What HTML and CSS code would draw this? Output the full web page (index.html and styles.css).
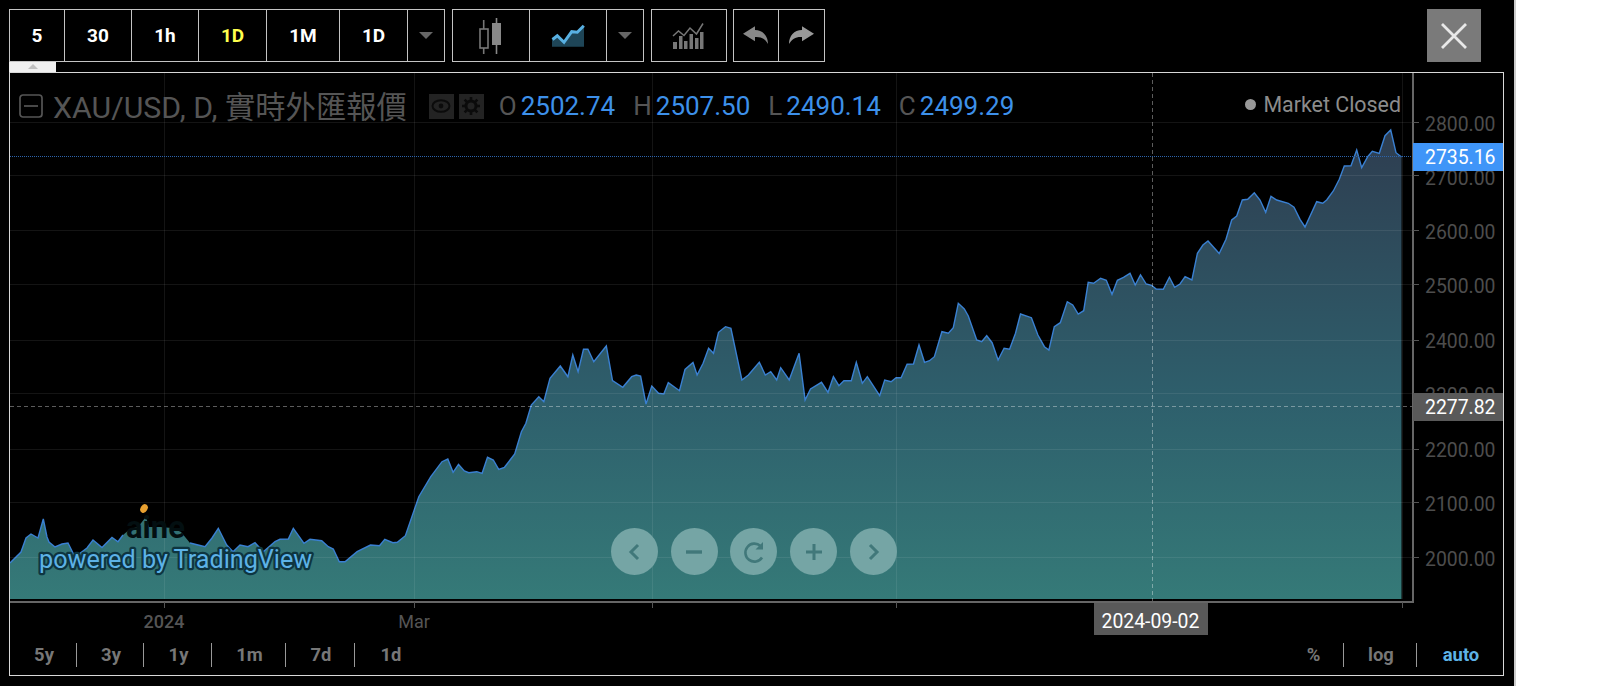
FILE: index.html
```html
<!DOCTYPE html>
<html lang="zh-Hant">
<head>
  <meta charset="UTF-8">
  <meta name="viewport" content="width=device-width, initial-scale=1.0">
  <title>XAU/USD</title>
  <link rel="stylesheet" href="styles.css">
</head>
<body>
  <div class="app">
    <div class="toolbar">
      <div class="group group-time">
        <div class="cell">5</div>
        <div class="cell">30</div>
        <div class="cell">1h</div>
        <div class="cell active">1D</div>
        <div class="cell">1M</div>
        <div class="cell">1D</div>
        <div class="cell"><span class="caret"></span></div>
      </div>
      <div class="group group-type">
        <div class="cell">
          <svg width="28" height="40" viewBox="478 16 28 40">
            <path d="M484.7 20V54" stroke="#777" stroke-width="1.6"/>
            <rect x="481" y="29" width="8" height="19" fill="#000" stroke="#777" stroke-width="1.6"/>
            <path d="M497.5 18V54" stroke="#888" stroke-width="1.6"/>
            <rect x="493" y="23" width="9" height="22" fill="#888"/>
          </svg>
        </div>
        <div class="cell">
          <svg width="36" height="26" viewBox="550 24 36 26">
            <path d="M552 40L557.3 36.7 564 43.3 571.7 32.7 577.3 33.3 584 26.7V47.7H552Z" fill="#1e4557"/>
            <path d="M552.5 40.5L557.3 36.7 564 43.3 571.7 32.7 577.3 33.3 583.8 26.7" fill="none" stroke="#58b0e2" stroke-width="3"/>
          </svg>
        </div>
        <div class="cell"><span class="caret"></span></div>
      </div>
      <div class="group group-study">
        <div class="cell">
          <svg width="34" height="30" viewBox="672 22 34 30">
            <path d="M673 37L678.5 32 684 36.5 690 29 696.5 35 703 24.5" fill="none" stroke="#777" stroke-width="1.5"/>
            <path d="M673 43h4v7h-4zM679 37h3.5v13H679zM684 42h3.5v8H684zM689.5 35h3.5v15h-3.5zM695 39h3.5v11H695zM700 33h3.5v17H700z" fill="#777"/>
          </svg>
        </div>
      </div>
      <div class="group group-undo">
        <div class="cell">
          <svg width="26" height="20" viewBox="744 28 26 20">
            <path d="M744 35.7L756 28.3V32C764 32 769 38 769 46 766 41 762 38.5 756 39V43.3Z" fill="#888"/>
          </svg>
        </div>
        <div class="cell">
          <svg width="26" height="20" viewBox="744 28 26 20">
            <path d="M769 35.7L757 28.3V32C749 32 744 38 744 46 747 41 751 38.5 757 39V43.3Z" fill="#999"/>
          </svg>
        </div>
      </div>
      <div class="close">
        <svg width="26" height="26" viewBox="0 0 26 26">
          <path d="M1 1L25 25M25 1L1 25" stroke="#e8e8e8" stroke-width="2.8"/>
        </svg>
      </div>
    </div>

    <div class="tab"><span class="tab-arrow"></span></div>

    <div class="frame">
      <svg class="chart" width="1493" height="563" viewBox="10 73 1493 563">
        <defs>
          <linearGradient id="areaFill" gradientUnits="userSpaceOnUse" x1="0" y1="130" x2="0" y2="599">
            <stop offset="0" stop-color="#2e3d50"/>
            <stop offset="0.575" stop-color="#2e5f6c"/>
            <stop offset="1" stop-color="#357a78"/>
          </linearGradient>
        </defs>

        <path class="area" d="M10 599V563L21 552 26 538 31 534 38 538 43.3 519 47 537 49 542 55 547 62 544 68 543 75 557 87 548 93 540 102 547.5 112 537.5 118 541.7 123 535 130 529 138 527 146 516.7 149 527 160 527 172 528 181 532 190 543 198 545 205 546.7 212 538 218.3 528.3 226.7 545 233 551.7 240 545 248 546.7 255 542.7 263.3 551.7 275 541.7 280 539.3 288.3 539 293.3 528.3 304 543.3 310 539.3 321.7 540.7 328.3 546.7 333.3 549 339.3 561.7 345 561.7 357.1 551.7 370.5 545 379.5 545.7 384.8 539.3 392.9 542.7 397.3 542.3 405.4 535.7 418.8 496.7 430.8 476.7 442 461.7 447.8 459 453.1 472.3 458.5 464.3 464.3 471 468.8 472.7 476.8 471.7 482.1 473.3 487.5 457.3 493.3 460 498.7 469.3 504.5 467.3 514.7 454 521.4 431.7 525.9 423.3 531.3 405 538.8 396.7 543.8 401.7 550 378.3 560.3 366 567.9 376.7 572.8 355 578.1 371.7 583.5 349.3 587.9 349.3 593.8 361.7 606.3 346 612.5 380.7 622.8 387.3 631.7 376.7 636.2 375 640.6 376 646 404 651.8 386 658.5 393.3 663.8 394 668.3 382.7 679.5 390.7 685 369.5 693 362.5 697.1 375 703.1 363.3 708.6 348.3 713.5 353.3 718.5 332.3 725.5 326.7 730.9 328.3 741.9 380 748.4 375 759.3 362.3 765.3 375 770.7 371.7 776.7 380 780.7 367.7 789.2 380 799.1 353.3 805.1 400 810.5 389 821.5 382.3 828 392.3 833.4 376.7 838.9 385.7 843.9 380.7 851.3 380.7 856.3 362.3 862.3 383.3 867.3 376.7 879.7 395.7 884.7 380 891.1 381.7 896.1 377.7 901.1 377.7 907.1 364.3 913.5 364 919 345 924.5 362.3 929.5 360.7 934.4 356.7 941.9 331.7 948.4 333.3 953.3 327.7 958.3 303.3 964.3 309 968.3 316 976.7 340 981.7 341.7 986.7 335.7 992.1 342.7 998.1 360 1004.1 348.3 1009.6 349.3 1015.5 333.3 1020.5 314 1031.4 317.7 1037.9 335 1044.4 346.7 1048.9 350 1054.3 326.7 1060.3 322.7 1067.3 301.7 1072.7 305 1078.2 314 1083.7 310.7 1088.2 282.3 1093.6 283.3 1100.6 278.3 1106.3 280.3 1112 294.3 1117.4 280.3 1123.5 277.3 1130 273.3 1135.2 285 1140.5 275 1146.2 284 1151.5 285.3 1156.2 289 1163.3 289.2 1169.4 277.3 1174.6 287.3 1180 284 1185.1 276.7 1191.9 280 1197.4 253.3 1202.9 245 1208 241 1219.2 253.5 1226 239.3 1231.7 220 1236.7 216 1242.3 200 1247.7 199.3 1254.3 192.7 1260 200 1265.7 212.3 1271 196.3 1276.7 200 1288.3 203.3 1294 207.3 1300 219.3 1305 227 1316.7 201.7 1322.7 203.3 1326.7 200 1333.3 191 1339.3 179.3 1344.3 166 1351 165.7 1356.7 150 1361.7 167.7 1367.7 156.7 1372.3 151.3 1379.3 153.3 1385 135.7 1390.7 130 1396 152.7 1401.5 157V599Z"/>
        <path class="line" d="M10 563L21 552 26 538 31 534 38 538 43.3 519 47 537 49 542 55 547 62 544 68 543 75 557 87 548 93 540 102 547.5 112 537.5 118 541.7 123 535M190 543 198 545 205 546.7 212 538 218.3 528.3 226.7 545 233 551.7 240 545 248 546.7 255 542.7 263.3 551.7 275 541.7 280 539.3 288.3 539 293.3 528.3 304 543.3 310 539.3 321.7 540.7 328.3 546.7 333.3 549 339.3 561.7 345 561.7 357.1 551.7 370.5 545 379.5 545.7 384.8 539.3 392.9 542.7 397.3 542.3 405.4 535.7 418.8 496.7 430.8 476.7 442 461.7 447.8 459 453.1 472.3 458.5 464.3 464.3 471 468.8 472.7 476.8 471.7 482.1 473.3 487.5 457.3 493.3 460 498.7 469.3 504.5 467.3 514.7 454 521.4 431.7 525.9 423.3 531.3 405 538.8 396.7 543.8 401.7 550 378.3 560.3 366 567.9 376.7 572.8 355 578.1 371.7 583.5 349.3 587.9 349.3 593.8 361.7 606.3 346 612.5 380.7 622.8 387.3 631.7 376.7 636.2 375 640.6 376 646 404 651.8 386 658.5 393.3 663.8 394 668.3 382.7 679.5 390.7 685 369.5 693 362.5 697.1 375 703.1 363.3 708.6 348.3 713.5 353.3 718.5 332.3 725.5 326.7 730.9 328.3 741.9 380 748.4 375 759.3 362.3 765.3 375 770.7 371.7 776.7 380 780.7 367.7 789.2 380 799.1 353.3 805.1 400 810.5 389 821.5 382.3 828 392.3 833.4 376.7 838.9 385.7 843.9 380.7 851.3 380.7 856.3 362.3 862.3 383.3 867.3 376.7 879.7 395.7 884.7 380 891.1 381.7 896.1 377.7 901.1 377.7 907.1 364.3 913.5 364 919 345 924.5 362.3 929.5 360.7 934.4 356.7 941.9 331.7 948.4 333.3 953.3 327.7 958.3 303.3 964.3 309 968.3 316 976.7 340 981.7 341.7 986.7 335.7 992.1 342.7 998.1 360 1004.1 348.3 1009.6 349.3 1015.5 333.3 1020.5 314 1031.4 317.7 1037.9 335 1044.4 346.7 1048.9 350 1054.3 326.7 1060.3 322.7 1067.3 301.7 1072.7 305 1078.2 314 1083.7 310.7 1088.2 282.3 1093.6 283.3 1100.6 278.3 1106.3 280.3 1112 294.3 1117.4 280.3 1123.5 277.3 1130 273.3 1135.2 285 1140.5 275 1146.2 284 1151.5 285.3 1156.2 289 1163.3 289.2 1169.4 277.3 1174.6 287.3 1180 284 1185.1 276.7 1191.9 280 1197.4 253.3 1202.9 245 1208 241 1219.2 253.5 1226 239.3 1231.7 220 1236.7 216 1242.3 200 1247.7 199.3 1254.3 192.7 1260 200 1265.7 212.3 1271 196.3 1276.7 200 1288.3 203.3 1294 207.3 1300 219.3 1305 227 1316.7 201.7 1322.7 203.3 1326.7 200 1333.3 191 1339.3 179.3 1344.3 166 1351 165.7 1356.7 150 1361.7 167.7 1367.7 156.7 1372.3 151.3 1379.3 153.3 1385 135.7 1390.7 130 1396 152.7 1401.5 157"/>

        <!-- grid -->
        <path class="grid" d="M10 122.5H1413M10 175.5H1413M10 230.5H1413M10 284.5H1413M10 340.5H1413M10 393.5H1413M10 449.5H1413M10 502.5H1413M10 557.5H1413M164.5 73V599M414.5 73V599M652.5 73V599M896.5 73V599M1402.5 73V599"/>

        <!-- logo sits under the text, only shows where it crosses the fill -->
        <text class="logo" x="126" y="538">aine</text>
        <ellipse cx="144" cy="508.5" rx="3.4" ry="4.6" transform="rotate(30 144 508.5)" fill="#e8a030"/>
        <text class="powered" x="39" y="568">powered by TradingView</text>

        <!-- crosshair and last price -->
        <path class="cross" d="M10 406.5H1420M1152.5 73V608"/>
        <path class="last" d="M10 156.5H1420"/>

        <!-- axes -->
        <path class="axis" d="M1413 73V602H10"/>
        <path class="tick" d="M1413 122.5h6M1413 175.5h6M1413 230.5h6M1413 284.5h6M1413 340.5h6M1413 393.5h6M1413 449.5h6M1413 502.5h6M1413 557.5h6M164.5 602v6M414.5 602v6M652.5 602v6M896.5 602v6M1402.5 602v6"/>

        <g class="price">
          <text x="1425" y="131">2800.00</text>
          <text x="1425" y="184.5">2700.00</text>
          <text x="1425" y="239">2600.00</text>
          <text x="1425" y="293">2500.00</text>
          <text x="1425" y="347.5">2400.00</text>
          <text x="1425" y="402">2300.00</text>
          <text x="1425" y="457">2200.00</text>
          <text x="1425" y="511">2100.00</text>
          <text x="1425" y="566">2000.00</text>
        </g>

        <rect x="1413" y="143" width="90" height="28" fill="#3f95f8"/>
        <text class="tag" x="1425" y="163.5">2735.16</text>
        <rect x="1413" y="393" width="90" height="28" fill="#595959"/>
        <text class="tag" x="1425" y="414">2277.82</text>

        <text class="time time-year" x="164" y="628">2024</text>
        <text class="time" x="414" y="628">Mar</text>
        <rect x="1094" y="603" width="114" height="32" fill="#595959"/>
        <text class="tag" x="1101.5" y="628">2024-09-02</text>
      </svg>

      <div class="legend">
        <svg class="collapse" width="24" height="24" viewBox="0 0 24 24">
          <rect x="1" y="1" width="22" height="22" rx="3" fill="none" stroke="#555" stroke-width="1.7"/>
          <path d="M5 12H19" stroke="#555" stroke-width="1.7"/>
        </svg>
        <span class="title">XAU/USD, D, 實時外匯報價</span>
        <span class="icon-box">
          <svg width="20" height="14" viewBox="0 0 20 14">
            <ellipse cx="10" cy="7" rx="8.5" ry="5.8" fill="none" stroke="#0b0b0b" stroke-width="2"/>
            <circle cx="10" cy="7" r="2.4" fill="#0b0b0b"/>
          </svg>
        </span>
        <span class="icon-box">
          <svg width="18" height="18" viewBox="0 0 18 18">
            <circle cx="9" cy="9" r="5" fill="none" stroke="#0b0b0b" stroke-width="3"/>
            <path d="M9 0V3.5M9 14.5V18M0 9H3.5M14.5 9H18M2.6 2.6L5 5M13 13L15.4 15.4M15.4 2.6L13 5M5 13L2.6 15.4" stroke="#0b0b0b" stroke-width="2.6"/>
          </svg>
        </span>
        <span class="ohlc ohlc-first"><i>O</i><b>2502.74</b></span>
        <span class="ohlc"><i>H</i><b>2507.50</b></span>
        <span class="ohlc"><i>L</i><b>2490.14</b></span>
        <span class="ohlc"><i>C</i><b>2499.29</b></span>
      </div>

      <div class="market"><span class="dot"></span>Market Closed</div>

      <div class="nav">
        <div class="nav-btn">
          <svg width="22" height="22" viewBox="0 0 22 22"><path d="M14 4L7 11 14 18" fill="none" stroke="#41787a" stroke-width="3"/></svg>
        </div>
        <div class="nav-btn">
          <svg width="22" height="22" viewBox="0 0 22 22"><path d="M3 11H19" stroke="#41787a" stroke-width="3.4"/></svg>
        </div>
        <div class="nav-btn">
          <svg width="24" height="24" viewBox="0 0 24 24"><path d="M20 17.5A9 9 0 1 1 18.5 6" fill="none" stroke="#41787a" stroke-width="2.6"/><path d="M21 2V9.5H13.5Z" fill="#41787a"/></svg>
        </div>
        <div class="nav-btn">
          <svg width="22" height="22" viewBox="0 0 22 22"><path d="M3 11H19M11 3V19" stroke="#41787a" stroke-width="3"/></svg>
        </div>
        <div class="nav-btn">
          <svg width="22" height="22" viewBox="0 0 22 22"><path d="M8 4L15 11 8 18" fill="none" stroke="#41787a" stroke-width="3"/></svg>
        </div>
      </div>

      <div class="range">
        <span class="range-item">5y</span>
        <span class="range-item">3y</span>
        <span class="range-item">1y</span>
        <span class="range-item">1m</span>
        <span class="range-item">7d</span>
        <span class="range-item last-item">1d</span>
        <span class="range-item range-right">%</span>
        <span class="range-item">log</span>
        <span class="range-item last-item selected">auto</span>
      </div>
    </div>
  </div>
</body>
</html>
```

FILE: styles.css
```css
* {
  box-sizing: border-box;
}
html, body {
  margin: 0;
  height: 100%;
  background: #fff;
  overflow: hidden;
}
body {
  font-family: Roboto, "Noto Sans CJK TC", sans-serif;
}
.app {
  width: 1516px;
  height: 686px;
  padding: 9px 9px 0;
  background: #000;
  border-right: 2px solid #ccc;
}

/* top bar */
.toolbar {
  display: flex;
  height: 53px;
}
.group {
  display: grid;
  height: 53px;
  border: 1px solid #c4c4c4;
}
.group-time {
  grid-template-columns: 54px 67px 67px 68px 73px 68px 37px;
}
.group-type {
  grid-template-columns: 76px 77px 37px;
  margin-left: 7px;
}
.group-study {
  grid-template-columns: 74px;
  margin-left: 7px;
}
.group-undo {
  grid-template-columns: 44px 46px;
  margin-left: 6px;
}
.cell {
  display: flex;
  align-items: center;
  justify-content: center;
  font-size: 19px;
  font-weight: 700;
  color: #fff;
  border-left: 1px solid #c4c4c4;
}
.cell:first-child {
  border-left: 0;
}
.cell.active {
  color: #ffff4d;
}
.caret {
  width: 0;
  height: 0;
  border-left: 7px solid transparent;
  border-right: 7px solid transparent;
  border-top: 7px solid #666;
}
.close {
  display: flex;
  align-items: center;
  justify-content: center;
  width: 54px;
  height: 53px;
  margin-left: auto;
  margin-right: 24px;
  background: #7a7a7a;
}

.tab {
  display: flex;
  justify-content: center;
  width: 47px;
  height: 10px;
  padding-top: 2px;
  background: #f0f0f0;
}
.tab-arrow {
  width: 0;
  height: 0;
  border-left: 5px solid transparent;
  border-right: 5px solid transparent;
  border-bottom: 5px solid #c0c0c0;
}

/* chart */
.frame {
  position: relative;
  width: 1495px;
  height: 604px;
  border: 1px solid #d8d8d8;
}
.chart {
  display: block;
}
.area {
  fill: url(#areaFill);
}
.line {
  fill: none;
  stroke: #3a80d2;
  stroke-width: 1.4;
}
.grid {
  fill: none;
  stroke: rgba(255, 255, 255, 0.08);
  stroke-width: 1;
}
.cross {
  fill: none;
  stroke: rgba(255, 255, 255, 0.36);
  stroke-width: 1;
  stroke-dasharray: 4 3;
}
.last {
  fill: none;
  stroke: #2c64ad;
  stroke-width: 1;
  stroke-dasharray: 1 1;
}
.axis {
  fill: none;
  stroke: #666;
  stroke-width: 2;
}
.tick {
  fill: none;
  stroke: #555;
  stroke-width: 1;
}
.price text {
  font-size: 19.4px;
  fill: #4d4d4d;
}
.tag {
  font-size: 19.4px;
  fill: #fff;
}
.time {
  font-size: 18px;
  fill: #555;
  text-anchor: middle;
}
.time-year {
  font-weight: 500;
}
.logo {
  font-size: 31px;
  font-weight: 700;
  fill: #030f11;
}
.powered {
  font-size: 25.2px;
  fill: #5db2e6;
  stroke: #0e3540;
  stroke-width: 4.5px;
  stroke-linejoin: round;
  paint-order: stroke;
}

.legend {
  position: absolute;
  top: 20px;
  left: 9px;
  display: flex;
  align-items: center;
  height: 26px;
}
.collapse {
  margin-right: 10px;
}
.title {
  font-size: 30.3px;
  color: #555;
  white-space: nowrap;
  margin-right: 22px;
  margin-bottom: 2px;
}
.icon-box {
  display: flex;
  align-items: center;
  justify-content: center;
  width: 25px;
  height: 25px;
  margin-right: 5px;
  background: #232323;
}
.ohlc {
  display: flex;
  gap: 4px;
  font-size: 26px;
  margin-right: 18px;
}
.ohlc-first {
  margin-left: 10px;
}
.ohlc i {
  font-style: normal;
  color: #555;
}
.ohlc b {
  font-weight: 400;
  color: #3d90ea;
}
.market {
  position: absolute;
  top: 19px;
  right: 102px;
  display: flex;
  align-items: center;
  gap: 7px;
  font-size: 21.4px;
  color: #8c8c8c;
}
.dot {
  width: 11px;
  height: 11px;
  border-radius: 50%;
  background: #999;
}

.nav {
  position: absolute;
  left: 601px;
  top: 455px;
  display: flex;
  gap: 12.7px;
}
.nav-btn {
  display: flex;
  align-items: center;
  justify-content: center;
  width: 47px;
  height: 47px;
  border-radius: 50%;
  background: #75a5a5;
}

/* bottom range bar */
.range {
  display: grid;
  grid-template-columns: 67px 67px 68px 74px 69px 70px 1fr 60px 73px 86px;
  align-items: center;
  height: 38px;
}
.range-item {
  height: 24px;
  line-height: 24px;
  padding-left: 2px;
  text-align: center;
  font-size: 18.4px;
  font-weight: 700;
  color: #777;
  border-right: 1px solid #999;
}
.last-item {
  border-right: 0;
}
.range-right {
  grid-column: 8;
  padding-left: 0;
}
.selected {
  color: #5db2e6;
}
```
